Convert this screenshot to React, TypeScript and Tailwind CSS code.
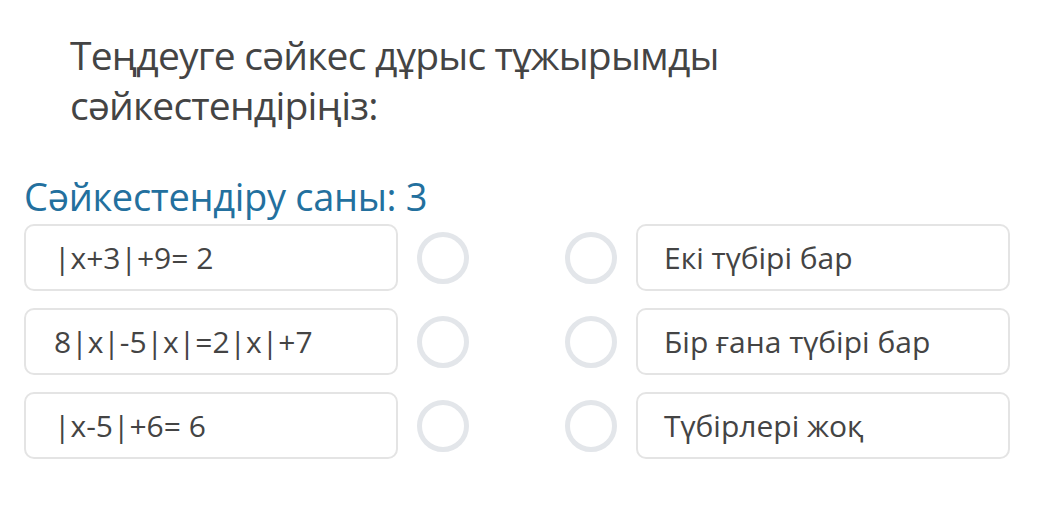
const rows = [
  { left: '|x+3|+9= 2', right: 'Екі түбірі бар' },
  { left: '8|x|-5|x|=2|x|+7', right: 'Бір ғана түбірі бар' },
  { left: '|x-5|+6= 6', right: 'Түбірлері жоқ' },
];

function Ring() {
  return <div className="h-[52px] w-[52px] shrink-0 rounded-full border-[5px] border-[#e3e6ea]" />;
}

export default function App() {
  return (
    <div
      className="h-[526px] w-[1056px] bg-white pl-6 pt-[30px] text-[#444]"
      style={{ fontFamily: '"Open Sans", "Noto Sans", sans-serif' }}
    >
      <h1 className="ml-[46px] text-[39px] leading-[50px] font-normal tracking-[-0.8px]">
        Теңдеуге сәйкес дұрыс тұжырымды
        <br />
        сәйкестендіріңіз:
      </h1>
      <div className="mt-[44px] text-[38px] leading-[44px] tracking-[-0.3px] text-[#23709e]">
        Сәйкестендіру саны: 3
      </div>
      <div className="mt-[6px] flex flex-col gap-[17px]">
        {rows.map((r) => (
          <div key={r.left} className="flex items-center">
            <div className="flex h-[67px] w-[374px] items-center rounded-[10px] border-2 border-[#e4e4e4] pl-[28px] text-[30px]">
              {r.left}
            </div>
            <div className="ml-[19px]">
              <Ring />
            </div>
            <div className="ml-[96px]">
              <Ring />
            </div>
            <div className="ml-[19px] flex h-[67px] w-[374px] items-center rounded-[10px] border-2 border-[#e4e4e4] pl-[26px] text-[30px]">
              {r.right}
            </div>
          </div>
        ))}
      </div>
    </div>
  );
}
